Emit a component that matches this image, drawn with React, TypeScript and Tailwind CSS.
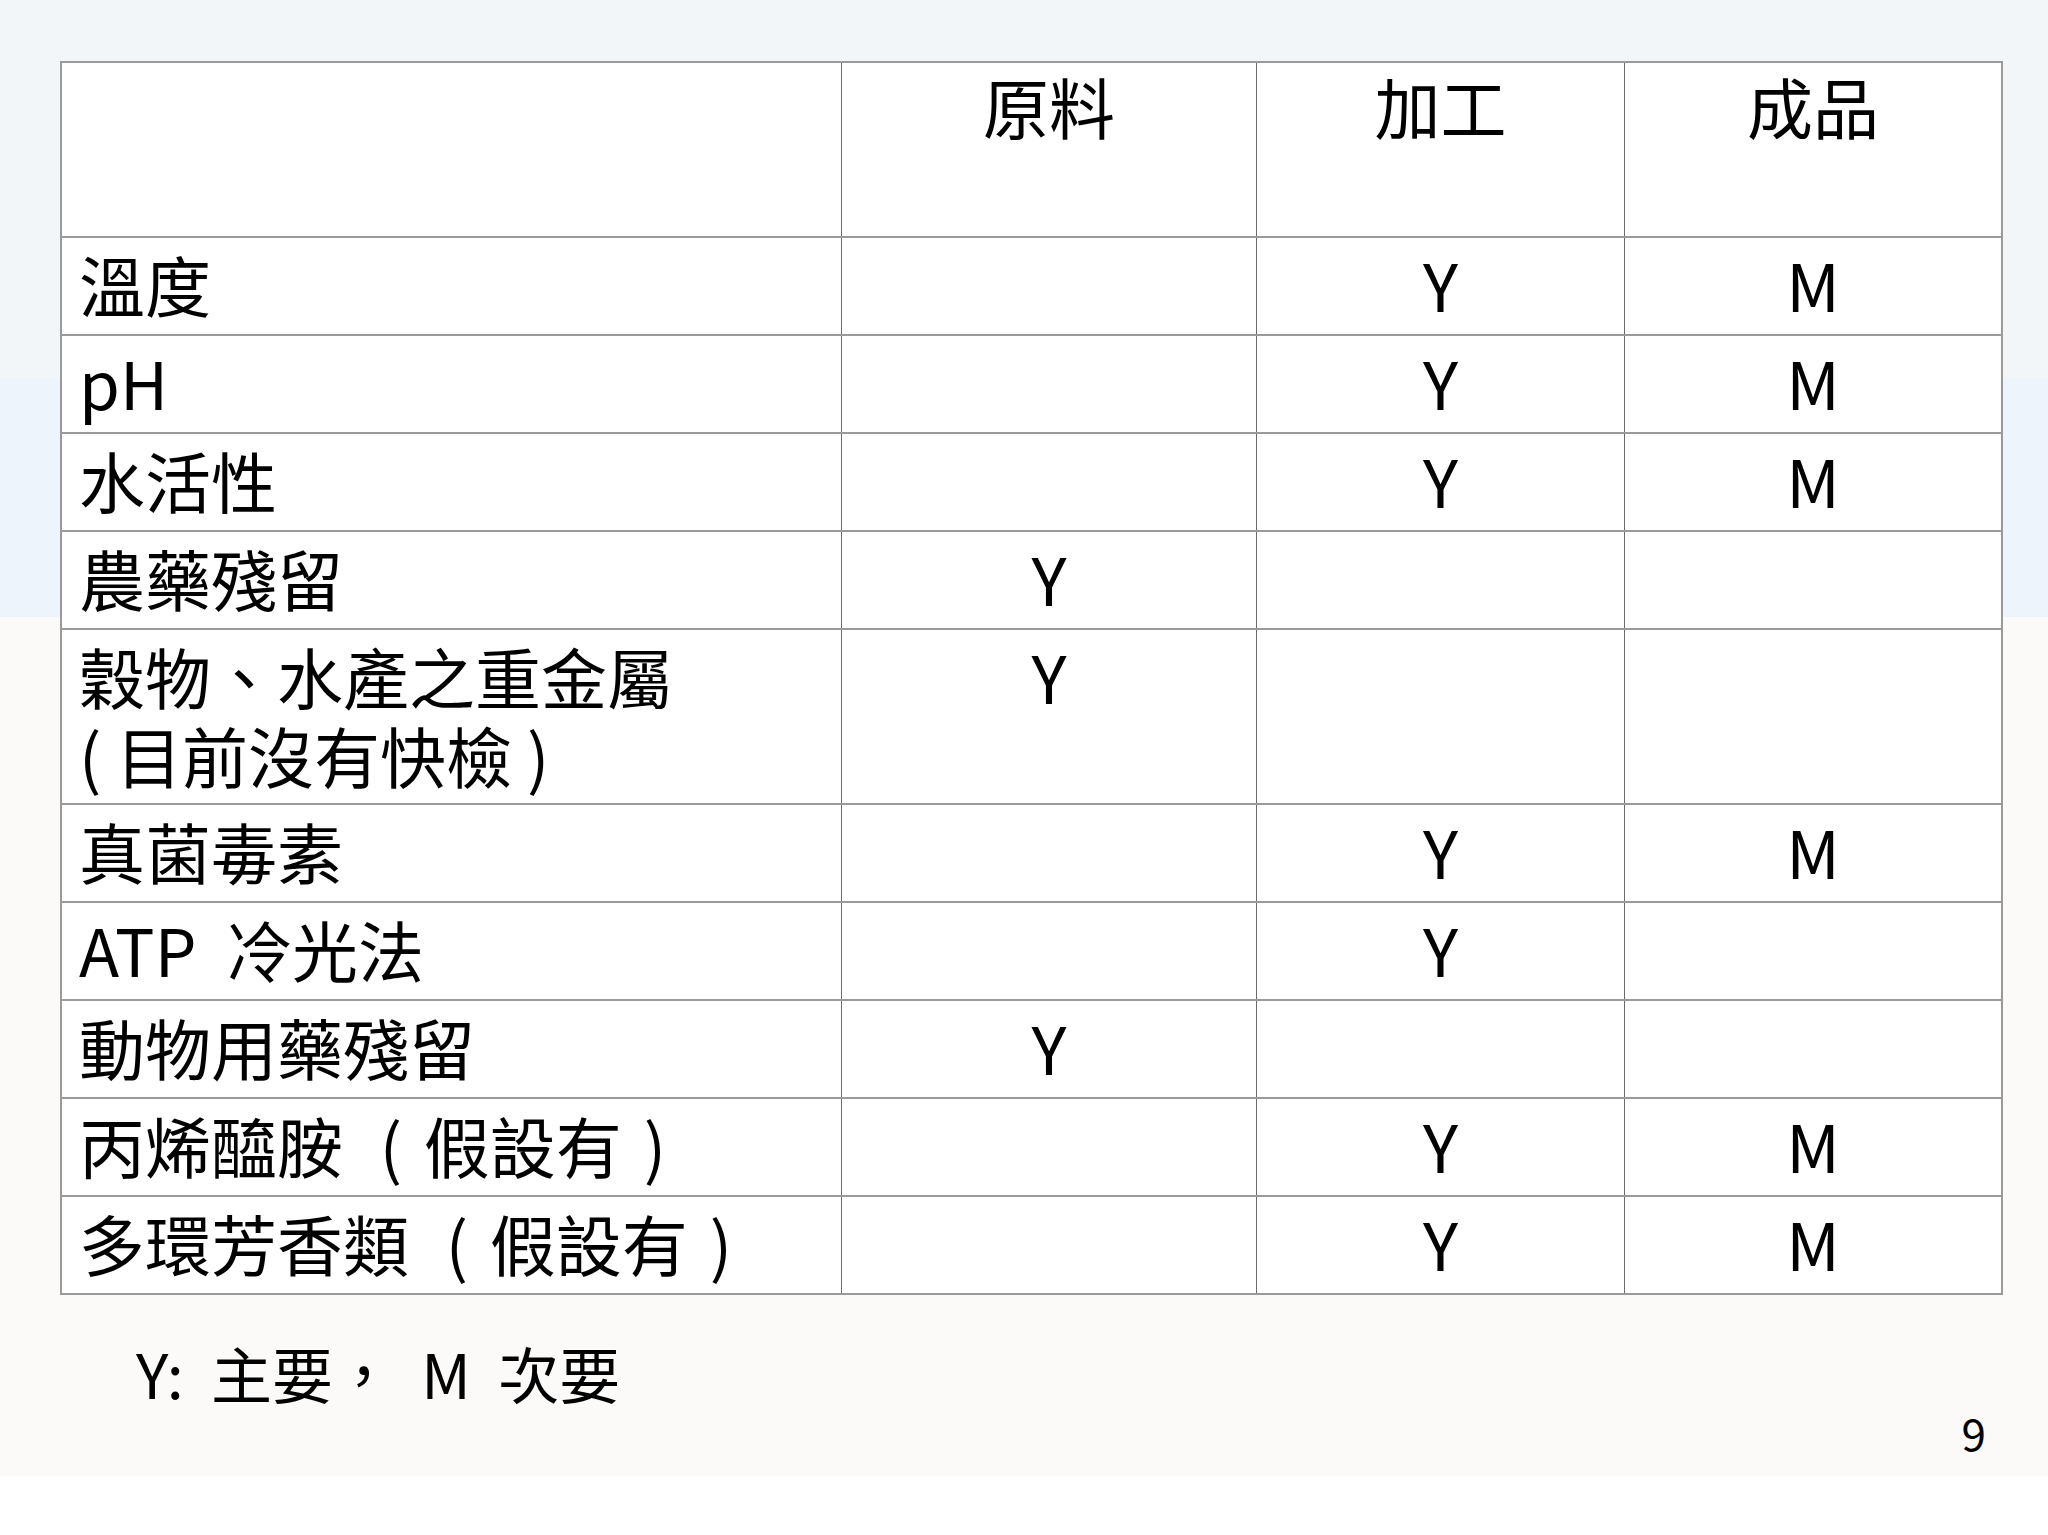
import React from "react";

type Row = {
  label: React.ReactNode[];
  raw?: string;
  proc?: string;
  done?: string;
  tall?: boolean;
};

// parens in the slide font sit in the middle of a full em box
function P({ c }: { c: string }) {
  return <span className="inline-block w-[1em] text-center">{c}</span>;
}

const ROWS: Row[] = [
  { label: ["溫度"], proc: "Y", done: "M" },
  { label: ["pH"], proc: "Y", done: "M" },
  { label: ["水活性"], proc: "Y", done: "M" },
  { label: ["農藥殘留"], raw: "Y" },
  { label: ["穀物、水產之重金屬", "( 目前沒有快檢 )"], raw: "Y", tall: true },
  { label: ["真菌毒素"], proc: "Y", done: "M" },
  { label: ["ATP  冷光法"], proc: "Y" },
  { label: ["動物用藥殘留"], raw: "Y" },
  {
    label: [
      <>
        丙烯醯胺 <P c="(" />假設有<P c=")" />
      </>,
    ],
    proc: "Y",
    done: "M",
  },
  {
    label: [
      <>
        多環芳香類 <P c="(" />假設有<P c=")" />
      </>,
    ],
    proc: "Y",
    done: "M",
  },
];

const COLS = "grid grid-cols-[779px_415px_368px_377px]";

function Cell({ children, first }: { children?: React.ReactNode; first?: boolean }) {
  return (
    <div
      className={
        first
          ? "pl-[17px] pt-[6px] whitespace-pre"
          : "border-l border-[#6b6b6b] pt-[6px] text-center whitespace-pre"
      }
    >
      {children}
    </div>
  );
}

export default function App() {
  return (
    <div className="h-[1535px] w-[2048px] overflow-hidden bg-[linear-gradient(180deg,#f3f6f8_0px,#f3f6f8_378px,#eef4fc_378px,#eef4fc_617px,#fcfaf8_617px,#fcfaf8_1476px,#ffffff_1476px)] font-['Noto_Sans_CJK_TC','Noto_Sans',sans-serif] text-black">
      <div className="pl-[60px] pt-[61px]">
        <div className="w-[1943px] border-2 border-b-0 border-[#9a9a9a] bg-white text-[66px] leading-[79px]">
          <div className={`${COLS} h-[175px] border-b-2 border-[#9a9a9a]`}>
            <div />
            <div className="border-l border-[#6b6b6b] pt-[3px] text-center">原料</div>
            <div className="border-l border-[#6b6b6b] pt-[3px] text-center">加工</div>
            <div className="border-l border-[#6b6b6b] pt-[3px] text-center">成品</div>
          </div>
          {ROWS.map((r, i) => (
            <div
              key={i}
              className={`${COLS} ${r.tall ? "h-[175px]" : "h-[98px]"} border-b-2 border-[#9a9a9a]`}
            >
              <Cell first>
                {r.label.map((l, j) => (
                  <div key={j}>{l}</div>
                ))}
              </Cell>
              <Cell>{r.raw}</Cell>
              <Cell>{r.proc}</Cell>
              <Cell>{r.done}</Cell>
            </div>
          ))}
        </div>
      </div>

      <div className="mt-[42px] pl-[136px] text-[61px] leading-[72px] whitespace-pre">
        {"Y:  主要，  M  次要"}
      </div>
      <div className="pr-[62px] text-right text-[44px] leading-[46px]">9</div>
    </div>
  );
}
